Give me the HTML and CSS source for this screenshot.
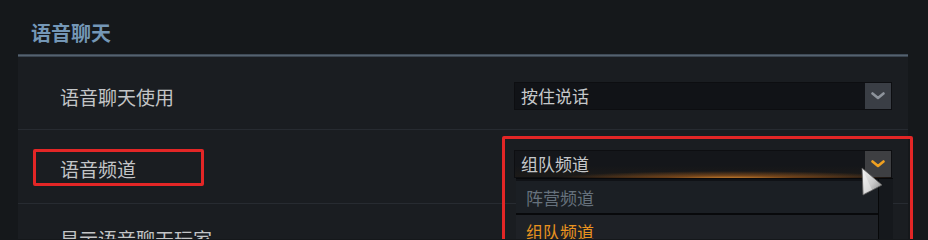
FILE: index.html
```html
<!DOCTYPE html>
<html lang="zh-CN">
<head>
<meta charset="utf-8">
<title>语音聊天</title>
<link rel="stylesheet" href="styles.css">
</head>
<body>
<div class="panel">
  <div class="section-title">语音聊天</div>
  <div class="rule"></div>

  <div class="row row-first">
    <div class="label">语音聊天使用</div>
    <div class="select">
      <span class="select-text">按住说话</span>
      <span class="select-btn">
        <svg width="14" height="8" viewBox="0 0 14 8"><path d="M1.5 1.5 L7 6 L12.5 1.5" fill="none" stroke="#8d939b" stroke-width="2.6" stroke-linecap="round" stroke-linejoin="round"/></svg>
      </span>
    </div>
  </div>

  <div class="row row-second">
    <div class="label">语音频道</div>
    <div class="select select-open">
      <span class="select-text">组队频道</span>
      <span class="select-btn">
        <svg width="14" height="8" viewBox="0 0 14 8"><path d="M1.5 1.5 L7 6 L12.5 1.5" fill="none" stroke="#f0a020" stroke-width="2.6" stroke-linecap="round" stroke-linejoin="round"/></svg>
      </span>
      <div class="glow"></div>
      <div class="dropdown">
        <div class="dropdown-list">
          <div class="option option-muted">阵营频道</div>
          <div class="option option-active">组队频道</div>
        </div>
        <div class="dropdown-track"></div>
      </div>
    </div>
    <div class="mark mark-label"></div>
    <div class="mark mark-select"></div>
    <svg class="cursor" width="24" height="30" viewBox="0 0 24 30">
      <defs>
        <linearGradient id="cg" x1="0" y1="0" x2="1" y2="1">
          <stop offset="0" stop-color="#f4f4f4"/>
          <stop offset="0.55" stop-color="#c9c9c9"/>
          <stop offset="1" stop-color="#7d7d7d"/>
        </linearGradient>
      </defs>
      <path d="M1 1 L21 18 L2 28 Z" fill="url(#cg)" stroke="#5a5a5a" stroke-width="0.8"/>
      <path d="M2 3 L11 23 L3 26 Z" fill="#ffffff" opacity="0.35"/>
    </svg>
  </div>

  <div class="row row-third">
    <div class="label">显示语音聊天玩家</div>
  </div>
</div>
</body>
</html>
```

FILE: styles.css
```css
html, body {
  margin: 0;
  padding: 0;
}

body {
  width: 928px;
  height: 239px;
  overflow: hidden;
  background: #15181b;
  font-family: "Noto Sans CJK SC", "Noto Sans", sans-serif;
}

.panel {
  margin-left: 18px;
  width: 890px;
}

.section-title {
  box-sizing: border-box;
  height: 54px;
  padding: 19px 0 0 13px;
  font-size: 20px;
  line-height: 28px;
  font-weight: 700;
  color: #7497b6;
}

.rule {
  height: 3px;
  background: linear-gradient(#343f4b, #55626f 50%, #2c3540);
}

.row {
  position: relative;
  display: grid;
  grid-template-columns: 496px 378px;
  align-items: start;
  background: #1a1d21;
  border-bottom: 1px solid #272b31;
}

.row-first {
  height: 72px;
}

.row-second {
  height: 73px;
}

.row-third {
  height: 60px;
  border-bottom: none;
}

.label {
  padding-left: 42px;
  font-size: 19px;
  line-height: 26px;
  color: #c3c5c7;
}

.row-first .label {
  margin-top: 27px;
}

.row-second .label {
  margin-top: 26px;
}

.row-third .label {
  margin-top: 22px;
}

.select {
  position: relative;
  box-sizing: border-box;
  height: 28px;
  display: flex;
  align-items: center;
  justify-content: space-between;
  background: #111317;
  border: 1px solid #0d0e11;
}

.row-first .select {
  margin-top: 25px;
}

.row-second .select {
  margin-top: 20px;
  background: linear-gradient(#14161a 55%, #1c1a18);
}

.select-text {
  position: relative;
  z-index: 1;
  padding-left: 6px;
  font-size: 17px;
  line-height: 26px;
  color: #c6c8ca;
}

.select-btn {
  position: relative;
  z-index: 1;
  width: 26px;
  height: 26px;
  display: flex;
  align-items: center;
  justify-content: center;
  background: #3a3e45;
}

.select-open .select-btn {
  background: #3e3f42;
}

.glow {
  position: absolute;
  left: 20px;
  right: 0;
  bottom: -2px;
  height: 8px;
  background: radial-gradient(ellipse 50% 100% at 55% 100%, rgba(255, 165, 60, 0.9) 0%, rgba(220, 120, 30, 0.45) 40%, rgba(200, 100, 20, 0) 100%);
}

.dropdown {
  position: absolute;
  top: 27px;
  left: 1px;
  width: 377px;
  height: 90px;
  display: flex;
  background: #101216;
  border-top: 1px solid #08090b;
  z-index: 2;
}

.dropdown-list {
  width: 362px;
  padding-top: 2px;
  border-right: 1px solid #070809;
}

.dropdown-track {
  flex: 1;
  background: #15181c;
}

.option {
  height: 32px;
  padding-left: 10px;
  font-size: 17px;
  line-height: 34px;
}

.option-muted {
  background: #1b1f24;
  color: #66717c;
  border-bottom: 2px solid #08090b;
}

.option-active {
  background: #1e2126;
  color: #e8921f;
}

.mark {
  position: absolute;
  border: 3px solid #e32626;
  border-radius: 2px;
  box-sizing: border-box;
  z-index: 3;
}

.mark-label {
  left: 15px;
  top: 19px;
  width: 171px;
  height: 37px;
}

.mark-select {
  left: 484px;
  top: 6px;
  width: 411px;
  height: 130px;
}

.cursor {
  position: absolute;
  left: 843px;
  top: 37px;
  z-index: 4;
}
```
